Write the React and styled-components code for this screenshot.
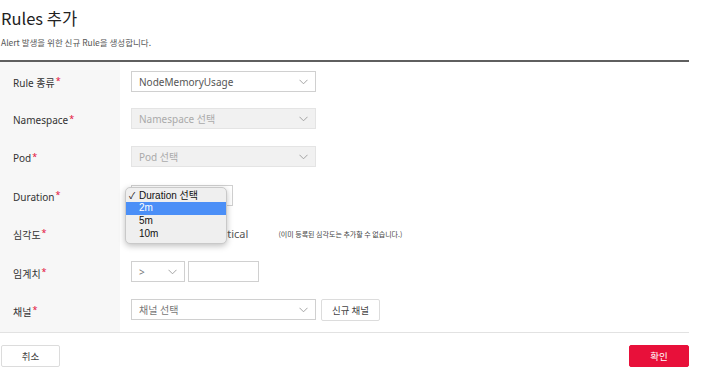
import React from "react";
import styled, { createGlobalStyle } from "styled-components";

const Global = createGlobalStyle`
  html, body { margin: 0; padding: 0; background: #fff; }
  body { font-family: "Noto Sans", "Noto Sans CJK KR", sans-serif; color: #333; }
  * { box-sizing: border-box; }
`;

const Page = styled.div`
  width: 689px;
  padding-top: 7px;
`;

const Header = styled.header`
  padding-left: 1px;
  height: 55px;
  border-bottom: 2px solid #5f5f5f;
`;

const Title = styled.h1`
  margin: 0;
  font-size: 16.5px;
  font-weight: 400;
  line-height: 22px;
  color: #222;
  font-family: "Noto Sans CJK KR", "Noto Sans", sans-serif;
`;

const Sub = styled.p`
  margin: 7px 0 0 0;
  font-size: 8.5px;
  line-height: 12px;
  color: #555;
  font-family: "Noto Sans CJK KR", "Noto Sans", sans-serif;
`;

const Form = styled.div`
  display: grid;
  grid-template-columns: 120px 1fr;
  grid-template-rows: repeat(6, 38.2px) 41px;
  border-bottom: 1px solid #e2e2e2;
`;

const Label = styled.div`
  background: #f7f7f7;
  display: flex;
  align-items: center;
  padding-left: 13px;
  padding-top: 2px;
  padding-bottom: ${(p) => (p.$last ? 3 : 0)}px;
  font-size: 10px;
  color: #333;
  font-family: "Noto Sans", "Noto Sans CJK KR", sans-serif;
`;

const Star = styled.span`
  color: #e3103a;
  margin-left: 1px;
  font-size: 9px;
  position: relative;
  top: -2px;
`;

const Field = styled.div`
  display: flex;
  align-items: center;
  padding-left: 11px;
  padding-top: ${(p) => (p.$first ? 2 : 0)}px;
  padding-bottom: ${(p) => (p.$last ? 4 : 1)}px;
  gap: ${(p) => p.$gap ?? 3}px;
`;

const SelectBox = styled.div`
  position: relative;
  width: ${(p) => p.$w}px;
  height: 21px;
  border: 1px solid ${(p) => (p.$disabled ? "#e4e4e4" : "#d0d0d0")};
  background: ${(p) => (p.$disabled ? "#f1f1f1" : "#fff")};
  display: flex;
  align-items: center;
  justify-content: space-between;
  padding: 0 7px 0 7px;
  font-size: 10px;
  color: ${(p) => (p.$disabled ? "#aaa" : p.$placeholder ? "#777" : "#555")};
  font-family: "Noto Sans", "Noto Sans CJK KR", sans-serif;
`;

const Input = styled.div`
  width: 71px;
  height: 21px;
  border: 1px solid #d0d0d0;
  background: #fff;
`;

const Button = styled.button`
  height: 22px;
  width: ${(p) => p.$w}px;
  border: 1px solid ${(p) => (p.$primary ? "#e8103a" : "#dcdcdc")};
  background: ${(p) => (p.$primary ? "#e8103a" : "#fff")};
  color: ${(p) => (p.$primary ? "#fff" : "#444")};
  font-size: 9.5px;
  font-family: "Noto Sans CJK KR", "Noto Sans", sans-serif;
  border-radius: 2px;
  padding: 0;
  cursor: pointer;
`;

const Footer = styled.div`
  display: flex;
  justify-content: space-between;
  padding-top: 12px;
  padding-left: 1px;
`;

const Radios = styled.div`
  display: flex;
  align-items: center;
  gap: 6px;
  font-size: 11px;
  color: #555;
  font-family: "Noto Sans", sans-serif;
`;

const Radio = styled.label`
  display: flex;
  align-items: center;
  gap: 5px;
`;

const Dot = styled.span`
  width: 11px;
  height: 11px;
  border-radius: 50%;
  border: 1px solid #bbb;
  background: #fff;
`;

const Note = styled.span`
  font-size: 7px;
  color: #444;
  margin-left: 27px;
  margin-top: 1px;
  font-family: "Noto Sans CJK KR", "Noto Sans", sans-serif;
`;

const Menu = styled.ul`
  position: absolute;
  left: -7px;
  top: 1px;
  width: 102px;
  margin: 0;
  padding: 2px 0 2px;
  list-style: none;
  background: #efefef;
  border: 1px solid #c9c9c9;
  border-radius: 5px;
  box-shadow: 0 2px 6px rgba(0, 0, 0, 0.25);
  font-family: "Liberation Sans", "Noto Sans CJK KR", sans-serif;
  font-size: 10px;
  color: #111;
  z-index: 5;
`;

const Option = styled.li`
  height: 12.8px;
  line-height: 12.8px;
  padding-left: 13px;
  position: relative;
  background: ${(p) => (p.$active ? "#4b8ff7" : "transparent")};
  color: ${(p) => (p.$active ? "#fff" : "#111")};
`;

const Check = styled.span`
  position: absolute;
  left: 3px;
  top: 0;
  font-size: 9px;
`;

const Chevron = () => (
  <svg width="9" height="6" viewBox="0 0 9 6">
    <path d="M0.5 0.8 L4.5 4.8 L8.5 0.8" fill="none" stroke="#9a9a9a" strokeWidth="0.9" />
  </svg>
);

const Sel = ({ w, text, disabled, placeholder, children }) => (
  <SelectBox $w={w} $disabled={disabled} $placeholder={placeholder}>
    <span>{text}</span>
    <Chevron />
    {children}
  </SelectBox>
);

const Req = ({ children, last }) => (
  <Label $last={last}>
    {children}
    <Star>*</Star>
  </Label>
);

export default function App() {
  return (
    <Page>
      <Global />
      <Header>
        <Title>Rules 추가</Title>
        <Sub>Alert 발생을 위한 신규 Rule을 생성합니다.</Sub>
      </Header>
      <Form>
        <Req>Rule 종류</Req>
        <Field $first>
          <Sel w={185} text="NodeMemoryUsage" />
        </Field>

        <Req>Namespace</Req>
        <Field>
          <Sel w={185} text="Namespace 선택" disabled />
        </Field>

        <Req>Pod</Req>
        <Field>
          <Sel w={185} text="Pod 선택" disabled />
        </Field>

        <Req>Duration</Req>
        <Field>
          <Sel w={102} text="Duration 선택" placeholder>
            <Menu>
              <Option>
                <Check>✓</Check>Duration 선택
              </Option>
              <Option $active>2m</Option>
              <Option>5m</Option>
              <Option>10m</Option>
            </Menu>
          </Sel>
        </Field>

        <Req>심각도</Req>
        <Field>
          <Radios>
            <Radio>
              <Dot />
              Warning
            </Radio>
            <Radio>
              <Dot />
              Critical
            </Radio>
          </Radios>
          <Note>(이미 등록된 심각도는 추가할 수 없습니다.)</Note>
        </Field>

        <Req>임계치</Req>
        <Field>
          <Sel w={54} text=">" placeholder />
          <Input />
        </Field>

        <Req last>채널</Req>
        <Field $gap={5} $last>
          <Sel w={185} text="채널 선택" placeholder />
          <Button $w={59}>신규 채널</Button>
        </Field>
      </Form>
      <Footer>
        <Button $w={59}>취소</Button>
        <Button $w={60} $primary>확인</Button>
      </Footer>
    </Page>
  );
}
